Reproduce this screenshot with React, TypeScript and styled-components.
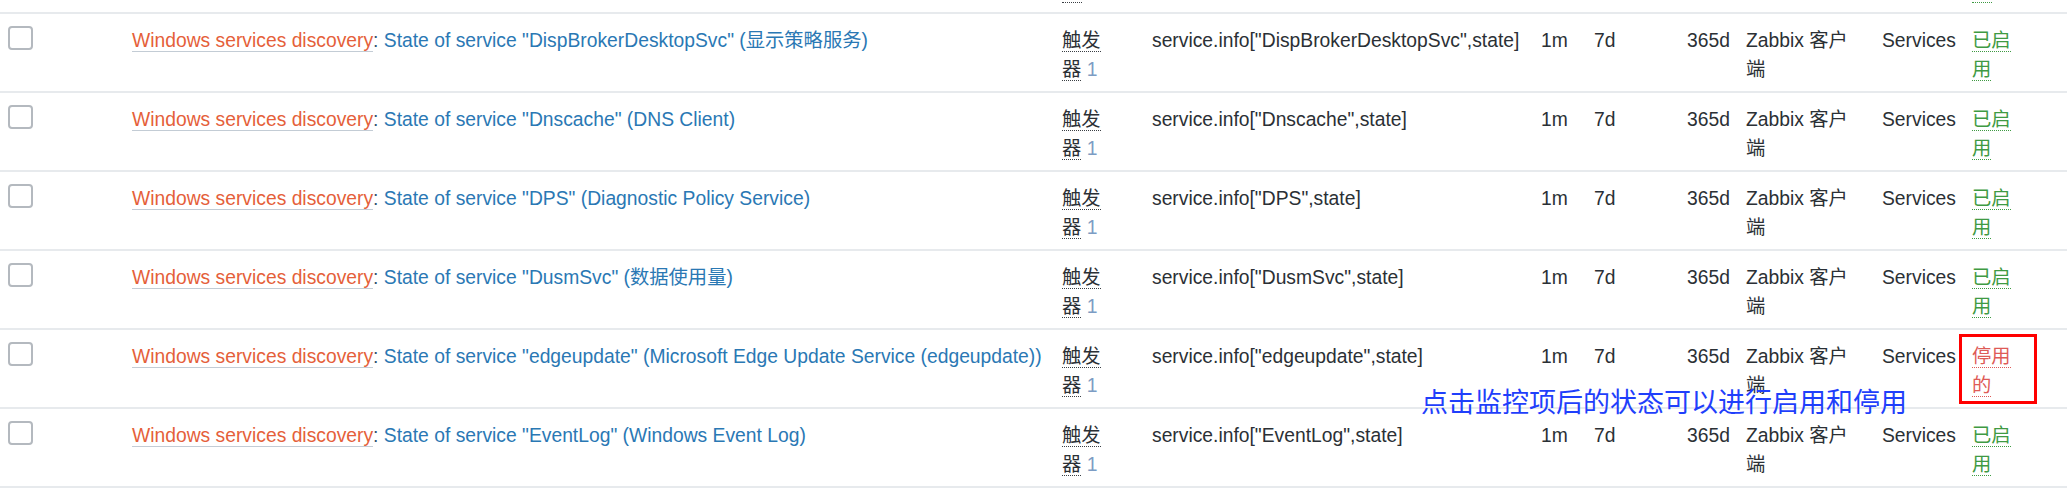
import React from "react";
import styled, { createGlobalStyle } from "styled-components";

type Item = {
  key: string;
  desc: string;
  enabled: boolean;
  note?: boolean;
};

const items: Item[] = [
  { key: "DispBrokerDesktopSvc", desc: "显示策略服务", enabled: true },
  { key: "Dnscache", desc: "DNS Client", enabled: true },
  { key: "DPS", desc: "Diagnostic Policy Service", enabled: true },
  { key: "DusmSvc", desc: "数据使用量", enabled: true },
  { key: "edgeupdate", desc: "Microsoft Edge Update Service (edgeupdate)", enabled: false, note: true },
  { key: "EventLog", desc: "Windows Event Log", enabled: true },
];

const widths = [132, 930, 90, 389, 53, 93, 59, 136, 77, 108];

// bottom edge of the row above, scrolled mostly out of view
const TopEdge = () => (
  <TailRow>
    <TailCell />
    <TailCell />
    <TailCell>
      <Stub $color="#3a3f44" />
    </TailCell>
    <TailCell />
    <TailCell />
    <TailCell />
    <TailCell />
    <TailCell />
    <TailCell />
    <TailCell $left={13}>
      <Stub $color="#3f9a43" />
    </TailCell>
  </TailRow>
);

const App = () => {
  return (
    <>
      <GlobalStyle />
      <Viewport>
        <Table>
          <colgroup>
            {widths.map((w, i) => (
              <col key={i} style={{ width: w }} />
            ))}
          </colgroup>
          <tbody>
            <TopEdge />
            {items.map((it) => (
              <Row key={it.key}>
                <CheckCell>
                  <Checkbox />
                </CheckCell>
                <NameCell>
                  <TemplateLink>Windows services discovery</TemplateLink>
                  <Delim>: </Delim>
                  <ItemLink>
                    State of service "{it.key}" ({it.desc})
                  </ItemLink>
                </NameCell>
                <Cell $padRight={40}>
                  <Dotted>触发器</Dotted> <Count>1</Count>
                </Cell>
                <Cell>service.info["{it.key}",state]</Cell>
                <Cell>1m</Cell>
                <Cell>7d</Cell>
                <Cell>365d</Cell>
                <Cell $padRight={20}>Zabbix 客户端</Cell>
                <Cell>Services</Cell>
                <StatusCell>
                  <Status $enabled={it.enabled}>{it.enabled ? "已启用" : "停用的"}</Status>
                  {it.note && (
                    <>
                      <Highlight />
                      <Note>点击监控项后的状态可以进行启用和停用</Note>
                    </>
                  )}
                </StatusCell>
              </Row>
            ))}
          </tbody>
        </Table>
      </Viewport>
    </>
  );
};

export default App;

const GlobalStyle = createGlobalStyle`
  html, body {
    margin: 0;
    padding: 0;
    background: #ffffff;
  }
  body {
    font-family: "Liberation Sans", Arial, "Noto Sans CJK SC", sans-serif;
    color: #2b3035;
  }
`;

const Viewport = styled.div`
  width: 2067px;
  height: 492px;
  overflow: hidden;
  background: #fff;
`;

const Table = styled.table`
  width: 2067px;
  table-layout: fixed;
  border-collapse: separate;
  border-spacing: 0;
  font-size: 19.3px;
  line-height: 28.5px;
`;

const TailRow = styled.tr`
  height: 14px;
`;

const TailCell = styled.td<{ $left?: number }>`
  box-sizing: border-box;
  height: 14px;
  padding: 1px 0 0 ${(p) => p.$left ?? 0}px;
  vertical-align: top;
  border-bottom: 2px solid #e7eaed;
`;

const Stub = styled.span<{ $color: string }>`
  display: block;
  width: 20px;
  height: 1px;
  border-bottom: 1px dotted ${(p) => p.$color};
`;

const Row = styled.tr`
  height: 79px;
`;

const Cell = styled.td<{ $padRight?: number }>`
  box-sizing: border-box;
  height: 79px;
  vertical-align: top;
  padding: 13px ${(p) => p.$padRight ?? 0}px 0 0;
  border-bottom: 2px solid #e7eaed;
  white-space: normal;
  word-break: normal;
`;

const CheckCell = styled(Cell)`
  padding: 12px 0 0 8px;
`;

const NameCell = styled(Cell)`
  white-space: nowrap;
`;

const StatusCell = styled(Cell)`
  position: relative;
  padding: 13px 50px 0 13px;
`;

const Checkbox = styled.span`
  display: block;
  box-sizing: border-box;
  width: 25px;
  height: 24px;
  border: 2px solid #b4b9bf;
  border-radius: 4px;
  background: #fff;
`;

const TemplateLink = styled.span`
  color: #e55f3a;
  border-bottom: 1px solid #c3ccd5;
`;

const Delim = styled.span`
  color: #33546e;
`;

const ItemLink = styled.span`
  color: #2a78b4;
`;

const Dotted = styled.span`
  color: #2b3035;
  border-bottom: 1px dotted #3a3f44;
`;

const Count = styled.span`
  color: #7c9cc4;
`;

const Status = styled.span<{ $enabled: boolean }>`
  color: ${(p) => (p.$enabled ? "#3f9a43" : "#de5b57")};
  border-bottom: 1px dotted ${(p) => (p.$enabled ? "#3f9a43" : "#de5b57")};
`;

const Highlight = styled.span`
  position: absolute;
  left: 0;
  top: 4px;
  width: 78px;
  height: 70px;
  box-sizing: border-box;
  border: 3px solid #ff0000;
`;

const Note = styled.span`
  position: absolute;
  left: -538px;
  top: 57px;
  white-space: nowrap;
  font-family: "Noto Sans CJK SC", sans-serif;
  font-size: 27px;
  line-height: 27px;
  color: #1f3ffb;
`;
